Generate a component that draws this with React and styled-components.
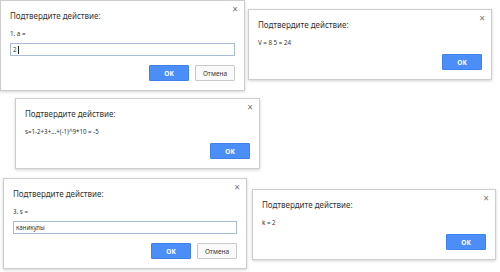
import React from 'react';
import styled, { createGlobalStyle } from 'styled-components';

const GlobalStyle = createGlobalStyle`
  html, body {
    margin: 0;
    padding: 0;
    background: #fff;
  }
  * {
    box-sizing: border-box;
  }
`;

const Desktop = styled.div`
  position: relative;
  width: 500px;
  height: 272px;
  overflow: hidden;
  background: #fff;
  font-family: 'Noto Sans', 'Open Sans', Arial, sans-serif;
`;

const DialogBox = styled.div`
  position: absolute;
  left: ${(p) => p.$x}px;
  top: ${(p) => p.$y}px;
  width: ${(p) => p.$w}px;
  padding: 9px 9px 9px 9px;
  background: #fff;
  border: 1px solid #cdcdcd;
  box-shadow: 0 1px 3px rgba(0, 0, 0, 0.18);
  display: flex;
  flex-direction: column;
`;

const Close = styled.span`
  position: absolute;
  top: 3px;
  right: 6px;
  font-size: 10px;
  line-height: 10px;
  color: #777;
`;

const Title = styled.div`
  font-size: 8px;
  line-height: 12px;
  color: #333;
  white-space: nowrap;
`;

const Message = styled.div`
  margin-top: 7px;
  font-size: 6.2px;
  line-height: 10px;
  color: #333;
  white-space: nowrap;
`;

const Field = styled.div`
  margin-top: 4px;
  height: 13px;
  border: 1px solid #a9bcd6;
  padding: 0 2px;
  font-size: 6.2px;
  line-height: 11px;
  color: #333;
  display: flex;
  align-items: center;
`;

const Caret = styled.span`
  display: inline-block;
  width: 1px;
  height: 8px;
  background: #222;
  margin-left: 1px;
`;

const Buttons = styled.div`
  margin-top: ${(p) => (p.$afterField ? 9 : 6)}px;
  display: flex;
  justify-content: flex-end;
  gap: 6px;
`;

const Button = styled.div`
  width: 40px;
  height: 16px;
  display: flex;
  align-items: center;
  justify-content: center;
  font-size: 6.5px;
  border-radius: 1px;
  ${(p) =>
    p.$primary
      ? `
    background: #4c8ef8;
    border: 1px solid #3f80ea;
    color: #fff;
    font-weight: bold;
  `
      : `
    background: #fafafa;
    border: 1px solid #c9c9c9;
    color: #333;
  `}
`;

const Dialog = ({ x, y, w, text, value, caret, cancel }) => (
  <DialogBox $x={x} $y={y} $w={w}>
    <Close>×</Close>
    <Title>Подтвердите действие:</Title>
    <Message>{text}</Message>
    {value !== undefined && (
      <Field>
        {value}
        {caret && <Caret />}
      </Field>
    )}
    <Buttons $afterField={value !== undefined}>
      <Button $primary>OK</Button>
      {cancel && <Button>Отмена</Button>}
    </Buttons>
  </DialogBox>
);

const dialogs = [
  { x: 0, y: 0, w: 245, text: '1. a =', value: '2', caret: true, cancel: true },
  { x: 248, y: 9, w: 244, text: 'V = 8 5 = 24' },
  { x: 15, y: 98, w: 245, text: 's=1-2+3+...+(-1)^9*10 = -5' },
  { x: 3, y: 178, w: 244, text: '3. s =', value: 'каникулы', cancel: true },
  { x: 252, y: 189, w: 244, text: 'k = 2' },
];

const App = () => (
  <>
    <GlobalStyle />
    <Desktop>
      {dialogs.map((d, i) => (
        <Dialog key={i} {...d} />
      ))}
    </Desktop>
  </>
);

export default App;
